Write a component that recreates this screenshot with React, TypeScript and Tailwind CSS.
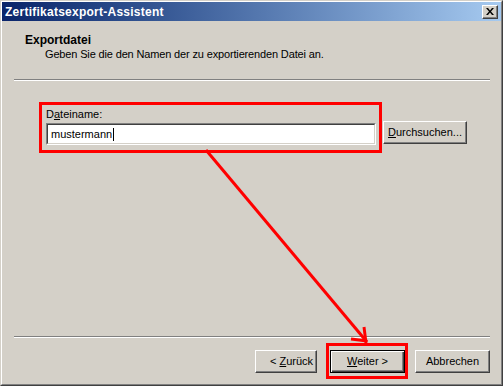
import type { ReactNode } from "react";

function ClassicButton({
  children,
  className = "",
  isDefault = false,
}: {
  children: ReactNode;
  className?: string;
  isDefault?: boolean;
}) {
  const frame = isDefault
    ? "border border-black shadow-[inset_1px_1px_#ffffff,inset_-1px_-1px_#404040,inset_-2px_-2px_#808080]"
    : "border border-t-white border-l-white border-r-[#404040] border-b-[#404040] shadow-[inset_-1px_-1px_#808080]";
  return (
    <div
      className={`flex h-[23px] items-center bg-[#d4d0c8] leading-[13px] ${frame} ${className}`}
    >
      {children}
    </div>
  );
}

function CloseGlyph() {
  return (
    <svg width="8" height="7" viewBox="0 0 8 7">
      <path d="M0 0h2l2 2.4L6 0h2L5 3.5 8 7H6L4 4.6 2 7H0l3-3.5z" fill="#000" />
    </svg>
  );
}

export default function App() {
  return (
    <div className="relative h-[386px] w-[503px] overflow-hidden border border-[#d4d0c8] border-r-[#404040] border-b-[#404040] bg-[#d4d0c8] font-['Liberation_Sans',Arial,sans-serif] text-[11px] text-black">
      <div className="flex h-full flex-col border border-white border-r-[#808080] border-b-[#808080]">
        {/* title bar */}
        <div className="flex h-[19px] items-center justify-between bg-linear-to-r from-[#0a246a] to-[#a6caf0] pl-[3px] pr-[3px]">
          <span className="text-[12px] font-bold leading-[14px] tracking-[0.25px] text-white">
            Zertifikatsexport-Assistent
          </span>
          <div className="flex h-[14px] w-[16px] items-center justify-center border border-t-white border-l-white border-r-[#404040] border-b-[#404040] bg-[#d4d0c8] shadow-[inset_-1px_-1px_#808080]">
            <CloseGlyph />
          </div>
        </div>

        {/* header */}
        <div className="h-[58px] pl-[23px] pt-[12px]">
          <div className="text-[12px] font-bold leading-[14px]">Exportdatei</div>
          <div className="pl-[20px] leading-[14px] tracking-[-0.15px]">
            Geben Sie die den Namen der zu exportierenden Datei an.
          </div>
        </div>
        <div className="ml-[12px] mr-[11px] h-[2px] border-t border-b border-t-[#808080] border-b-white" />

        {/* body */}
        <div className="flex flex-1 items-start pl-[37px] pt-[21px]">
          <div className="w-[343px] border-[3px] border-[#ff0000] pb-[5px] pl-[4px] pr-[2px] pt-[3px]">
            <div className="h-[13px] leading-[13px]">
              D<span className="underline">a</span>teiname:
            </div>
            <div className="mt-[2px] h-[22px] w-[330px] border border-t-[#808080] border-l-[#808080] border-r-white border-b-white">
              <div className="flex h-full items-center border border-t-[#404040] border-l-[#404040] border-r-[#d4d0c8] border-b-[#d4d0c8] bg-white pl-[3px] leading-[13px]">
                mustermann
                <span className="ml-px h-[13px] w-px bg-black" />
              </div>
            </div>
          </div>
          <ClassicButton className="ml-[1px] mt-[19px] h-[22px] w-[84px] justify-center">
            <span>
              <span className="underline">D</span>urchsuchen...
            </span>
          </ClassicButton>
        </div>

        <div className="ml-[12px] mr-[11px] h-[2px] border-t border-b border-t-[#808080] border-b-white" />

        {/* footer buttons */}
        <div className="flex justify-end pb-[11px] pr-[11px] pt-[12px]">
          <ClassicButton className="mr-[13px] w-[62px] justify-start pl-[14px]">
            <span>
              &lt; <span className="underline">Z</span>urück
            </span>
          </ClassicButton>
          <div className="relative">
            <ClassicButton isDefault className="w-[75px] justify-center">
              <span>
                <span className="underline">W</span>eiter &gt;
              </span>
            </ClassicButton>
            <div className="absolute -bottom-[6px] -left-[4px] -right-[3px] -top-[7px] border-[3px] border-[#ff0000]" />
          </div>
          <ClassicButton className="ml-[10px] w-[75px] justify-center">
            Abbrechen
          </ClassicButton>
        </div>
      </div>

      {/* annotation arrow */}
      <svg
        className="pointer-events-none absolute -left-px -top-px"
        width="503"
        height="386"
        viewBox="0 0 503 386"
      >
        <g stroke="#ff0000" strokeWidth="3" fill="none">
          <path d="M206 150 L367 342" />
          <path d="M366 343 L364 327" />
          <path d="M367 341 L351 339" />
        </g>
      </svg>
    </div>
  );
}
